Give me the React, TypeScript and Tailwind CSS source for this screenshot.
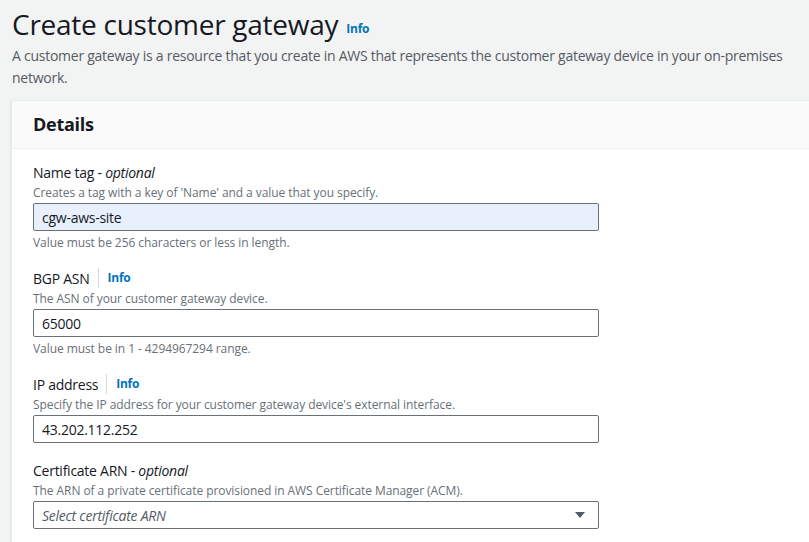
import React from 'react';

const InfoLink: React.FC = () => (
    <span className="text-[12px] font-bold text-[#0073bb] leading-none">Info</span>
);

interface FieldProps {
    label: string;
    optional?: boolean;
    info?: boolean;
    description: string;
    constraint?: string;
    children: React.ReactNode;
}

const Field: React.FC<FieldProps> = ({ label, optional, info, description, constraint, children }) => {
    return (
        <div className="flex flex-col">
            <div className="flex items-center h-[22px] text-[14px] text-[#16191f]">
                <span>{label}</span>
                {optional && (
                    <span>
                        &nbsp;- <i>optional</i>
                    </span>
                )}
                {info && (
                    <>
                        <span className="ml-[8px] mr-[9px] h-[20px] w-px bg-[#d5dbdb]" />
                        <InfoLink />
                    </>
                )}
            </div>
            <div className="text-[12px] leading-[16px] tracking-[-0.006em] text-[#687078] mt-[2px]">
                {description}
            </div>
            <div className="mt-[2px]">{children}</div>
            {constraint && (
                <div className="text-[12px] leading-[16px] tracking-[-0.006em] text-[#687078] mt-[4px]">
                    {constraint}
                </div>
            )}
        </div>
    );
};

const TextBox: React.FC<{ value: string; autofill?: boolean }> = ({ value, autofill }) => (
    <div
        className={`w-[566px] h-[28px] rounded-[2px] border border-[#687078] px-[8px] flex items-center text-[14px] text-[#16191f] ${
            autofill ? 'bg-[#e8f0fe]' : 'bg-white'
        }`}
    >
        {value}
    </div>
);

export default function App() {
    return (
        <div
            className="w-[809px] h-[542px] overflow-hidden bg-[#f2f3f3] tracking-[-0.016em]"
            style={{ fontFamily: '"Open Sans", "Noto Sans", Arial, sans-serif' }}
        >
            <div className="pl-[12px] pt-[6px]">
                <div className="flex items-end gap-[8px]">
                    <h1 className="text-[28px] leading-[36px] text-[#16191f]">Create customer gateway</h1>
                    <span className="mb-[3px]">
                        <InfoLink />
                    </span>
                </div>
                <p className="text-[14px] leading-[22px] text-[#545b64] mt-[3px] pr-[12px]">
                    A customer gateway is a resource that you create in AWS that represents the customer gateway
                    device in your on-premises network.
                </p>
            </div>

            <div className="ml-[11px] mt-[11px] border-l border-t border-[#eaeded] bg-white shadow-[0_1px_1px_0_rgba(0,28,36,0.3)]">
                <div className="h-[48px] bg-[#fafafa] border-b border-[#eaeded] flex items-center pl-[21px]">
                    <h2 className="text-[18px] font-bold text-[#16191f]">Details</h2>
                </div>
                <div className="pl-[21px] pt-[12px] pb-[20px] flex flex-col gap-[16px]">
                    <Field
                        label="Name tag"
                        optional
                        description="Creates a tag with a key of 'Name' and a value that you specify."
                        constraint="Value must be 256 characters or less in length."
                    >
                        <TextBox value="cgw-aws-site" autofill />
                    </Field>
                    <Field
                        label="BGP ASN"
                        info
                        description="The ASN of your customer gateway device."
                        constraint="Value must be in 1 - 4294967294 range."
                    >
                        <TextBox value="65000" />
                    </Field>
                    <Field
                        label="IP address"
                        info
                        description="Specify the IP address for your customer gateway device's external interface."
                    >
                        <TextBox value="43.202.112.252" />
                    </Field>
                    <Field
                        label="Certificate ARN"
                        optional
                        description="The ARN of a private certificate provisioned in AWS Certificate Manager (ACM)."
                    >
                        <div className="w-[566px] h-[28px] rounded-[2px] border border-[#687078] bg-white pl-[8px] pr-[12px] flex items-center justify-between text-[14px] text-[#545b64]">
                            <i>Select certificate ARN</i>
                            <svg width="12" height="8" viewBox="0 0 12 8">
                                <path d="M1 1h10L6 7z" fill="#545b64" />
                            </svg>
                        </div>
                    </Field>
                </div>
            </div>
        </div>
    );
}
